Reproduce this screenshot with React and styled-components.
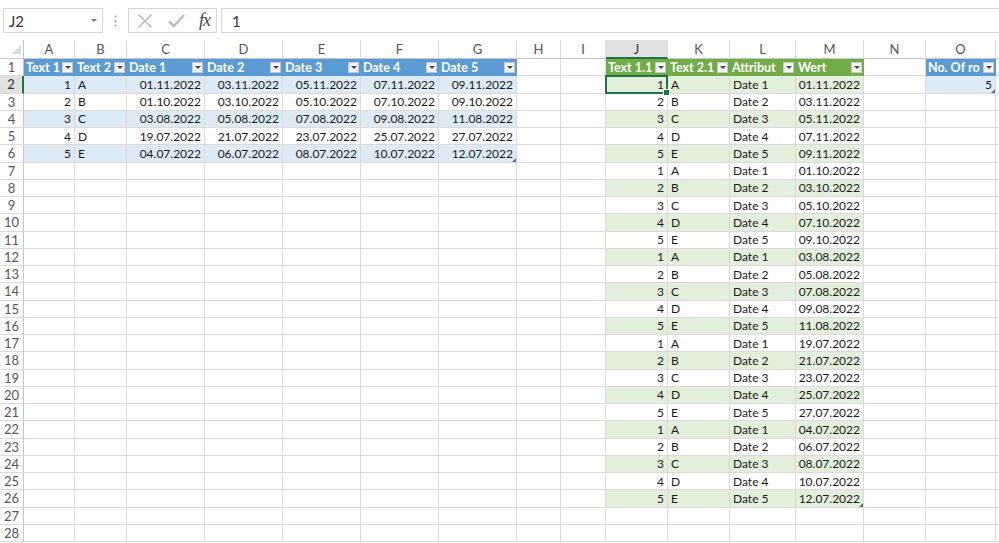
import React from 'react'
import styled, { createGlobalStyle, css } from 'styled-components'

const GlobalStyle = createGlobalStyle`
  html, body {
    margin: 0;
    padding: 0;
    background: #fff;
  }
  body {
    width: 999px;
    height: 543px;
    overflow: hidden;
    font-family: Lato, "Liberation Sans", sans-serif;
  }
`

const TONES = {
  blue: { head: '#5b9bd5', band: '#ddebf7', mark: '#41719c' },
  green: { head: '#70ad47', band: '#e2efda', mark: '#507e32' }
}

const COLS = [
  { id: 'A', w: 51 }, { id: 'B', w: 52 }, { id: 'C', w: 78 }, { id: 'D', w: 78 },
  { id: 'E', w: 78 }, { id: 'F', w: 78 }, { id: 'G', w: 78 }, { id: 'H', w: 44 },
  { id: 'I', w: 45 }, { id: 'J', w: 62 }, { id: 'K', w: 62 }, { id: 'L', w: 66 },
  { id: 'M', w: 68 }, { id: 'N', w: 62 }, { id: 'O', w: 70 }, { id: '', w: 0 }
]

const LETTERS = ['A', 'B', 'C', 'D', 'E']
const DATES = [
  ['01.11.2022', '03.11.2022', '05.11.2022', '07.11.2022', '09.11.2022'],
  ['01.10.2022', '03.10.2022', '05.10.2022', '07.10.2022', '09.10.2022'],
  ['03.08.2022', '05.08.2022', '07.08.2022', '09.08.2022', '11.08.2022'],
  ['19.07.2022', '21.07.2022', '23.07.2022', '25.07.2022', '27.07.2022'],
  ['04.07.2022', '06.07.2022', '08.07.2022', '10.07.2022', '12.07.2022']
]

// builds the cell map: key "row-col"
const buildCells = () => {
  const cells = {}
  const put = (r, c, cell) => { cells[`${r}-${c}`] = cell }

  // blue table A1:G6
  const blueHead = ['Text 1', 'Text 2', 'Date 1', 'Date 2', 'Date 3', 'Date 4', 'Date 5']
  blueHead.forEach((t, c) => put(1, c, { text: t, tone: 'blue', head: true }))
  DATES.forEach((row, i) => {
    const r = i + 2
    const band = r % 2 === 0
    put(r, 0, { text: String(i + 1), align: 'right', tone: 'blue', band })
    put(r, 1, { text: LETTERS[i], tone: 'blue', band })
    row.forEach((d, k) => put(r, k + 2, { text: d, align: 'right', tone: 'blue', band, handle: r === 6 && k === 4 }))
  })

  // green table J1:M26
  const greenHead = ['Text 1.1', 'Text 2.1', 'Attribut', 'Wert']
  greenHead.forEach((t, c) => put(1, c + 9, { text: t, tone: 'green', head: true }))
  DATES.forEach((row, i) => {
    row.forEach((d, k) => {
      const r = 2 + i * 5 + k
      const band = r % 2 === 0
      put(r, 9, { text: String(k + 1), align: 'right', tone: 'green', band, selected: r === 2 })
      put(r, 10, { text: LETTERS[k], tone: 'green', band })
      put(r, 11, { text: `Date ${k + 1}`, tone: 'green', band })
      put(r, 12, { text: d, align: 'right', tone: 'green', band, handle: r === 26 })
    })
  })

  // small blue table O1:O2, header clipped by its filter button
  put(1, 14, { text: 'No. Of ro', tone: 'blue', head: true })
  put(2, 14, { text: '5', align: 'right', tone: 'blue', band: true, handle: true })

  return cells
}

const CELLS = buildCells()
const ROWS = Array.from({ length: 28 }, (_, i) => i + 1)

const Page = styled.div`
  width: 999px;
  height: 543px;
  overflow: hidden;
`

const FormulaBar = styled.div`
  display: flex;
  align-items: stretch;
  height: 25px;
  margin-top: 8px;
  padding-left: 3px;
`

const NameBox = styled.div`
  width: 100px;
  box-sizing: border-box;
  border: 1px solid #d5d5d5;
  display: flex;
  align-items: center;
  justify-content: space-between;
  padding: 0 5px 0 5px;
  font-size: 15px;
  color: #333;
`

const Caret = styled.span`
  width: 0;
  height: 0;
  border-left: 3px solid transparent;
  border-right: 3px solid transparent;
  border-top: 3px solid #777;
`

const Grip = styled.div`
  width: 25px;
  display: flex;
  align-items: center;
  justify-content: center;
`

const FxBox = styled.div`
  width: 89px;
  box-sizing: border-box;
  border: 1px solid #d5d5d5;
  display: flex;
  align-items: center;
  justify-content: space-between;
  padding: 0 6px 0 8px;
`

const FxLabel = styled.span`
  font-family: "Liberation Serif", serif;
  font-style: italic;
  font-size: 18px;
  color: #444;
  letter-spacing: -1px;
`

const FormulaInput = styled.div`
  flex: 1;
  margin-left: 4px;
  box-sizing: border-box;
  border: 1px solid #d5d5d5;
  border-right: none;
  display: flex;
  align-items: center;
  padding-left: 10px;
  font-size: 15px;
  color: #333;
`

const Sheet = styled.div`
  margin-top: 7px;
  display: grid;
  grid-template-columns: 24px ${COLS.map(c => (c.w ? `${c.w}px` : '1fr')).join(' ')};
  grid-template-rows: 19px repeat(28, 17.25px);
`

const headerBase = css`
  box-sizing: border-box;
  display: flex;
  align-items: center;
  justify-content: center;
  font-size: 13px;
  color: #555;
  background: #fff;
`

const Corner = styled.div`
  ${headerBase};
  position: relative;
  border-right: 1px solid #c6c6c6;
  border-bottom: 1px solid #c6c6c6;
  &::after {
    content: '';
    position: absolute;
    right: 2px;
    bottom: 4px;
    border-left: 9px solid transparent;
    border-bottom: 9px solid #dadada;
  }
`

const ColHead = styled.div`
  ${headerBase};
  border-right: 1px solid #dadada;
  border-bottom: 1px solid #c6c6c6;
  ${p => p.$active && css`
    background: #e1e1e1;
    border-bottom: 2px solid #217346;
    color: #333;
  `}
`

const RowHead = styled.div`
  ${headerBase};
  border-right: 1px solid #c6c6c6;
  border-bottom: 1px solid #dadada;
  ${p => p.$active && css`
    background: #e1e1e1;
    border-right: 2px solid #217346;
    color: #333;
  `}
`

const Cell = styled.div`
  position: relative;
  box-sizing: border-box;
  display: flex;
  align-items: center;
  justify-content: ${p => (p.$align === 'right' ? 'flex-end' : 'flex-start')};
  padding: 0 3px 0 3px;
  min-width: 0;
  font-size: 12px;
  color: #1a1a1a;
  white-space: nowrap;
  border-right: 1px solid #dadada;
  border-bottom: 1px solid #dadada;
  background: ${p => (p.$tone && p.$band ? TONES[p.$tone].band : '#fff')};
  ${p => p.$head && css`
    background: ${TONES[p.$tone].head};
    border-right-color: ${TONES[p.$tone].head};
    border-bottom-color: ${TONES[p.$tone].head};
    color: #fff;
    font-weight: bold;
    font-size: 12.5px;
    padding: 0 1px 0 2px;
    gap: 1px;
  `}
`

const HeadText = styled.span`
  flex: 1;
  min-width: 0;
  overflow: hidden;
`

const FilterButton = styled.span`
  flex: none;
  width: 11px;
  height: 11px;
  box-sizing: border-box;
  border: 1px solid #c8c8c8;
  background: #f4f4f4;
  display: flex;
  align-items: center;
  justify-content: center;
  &::after {
    content: '';
    border-left: 3px solid transparent;
    border-right: 3px solid transparent;
    border-top: 3px solid #444;
  }
`

const ResizeMark = styled.span`
  position: absolute;
  right: 0;
  bottom: 0;
  border-left: 4px solid transparent;
  border-bottom: 4px solid ${p => TONES[p.$tone].mark};
`

const Selection = styled.span`
  position: absolute;
  top: -1px;
  left: -1px;
  right: -1px;
  bottom: -1px;
  border: 2px solid #217346;
  pointer-events: none;
  z-index: 2;
`

const FillHandle = styled.span`
  position: absolute;
  right: -4px;
  bottom: -4px;
  width: 5px;
  height: 5px;
  background: #217346;
  border: 1px solid #fff;
  z-index: 3;
`

const CloseIcon = () => (
  <svg width='16' height='16' viewBox='0 0 16 16'>
    <path d='M1.5 1.5 L14.5 14.5 M14.5 1.5 L1.5 14.5' stroke='#bcbcbc' strokeWidth='1.6' fill='none' />
  </svg>
)

const CheckIcon = () => (
  <svg width='17' height='14' viewBox='0 0 17 14'>
    <path d='M1 7.5 L6 12 L16 1' stroke='#bcbcbc' strokeWidth='2.4' fill='none' />
  </svg>
)

const GripDots = () => (
  <svg width='3' height='12' viewBox='0 0 3 12'>
    <circle cx='1.5' cy='1.5' r='1' fill='#9a9a9a' />
    <circle cx='1.5' cy='6' r='1' fill='#9a9a9a' />
    <circle cx='1.5' cy='10.5' r='1' fill='#9a9a9a' />
  </svg>
)

const SheetCell = ({ cell }) => {
  if (!cell) return <Cell />
  if (cell.head) {
    return (
      <Cell $tone={cell.tone} $head>
        <HeadText>{cell.text}</HeadText>
        <FilterButton />
      </Cell>
    )
  }
  return (
    <Cell $tone={cell.tone} $band={cell.band} $align={cell.align}>
      {cell.text}
      {cell.handle && <ResizeMark $tone={cell.tone} />}
      {cell.selected && (
        <Selection>
          <FillHandle />
        </Selection>
      )}
    </Cell>
  )
}

export default function App () {
  return (
    <Page>
      <GlobalStyle />
      <FormulaBar>
        <NameBox>
          J2
          <Caret />
        </NameBox>
        <Grip><GripDots /></Grip>
        <FxBox>
          <CloseIcon />
          <CheckIcon />
          <FxLabel>fx</FxLabel>
        </FxBox>
        <FormulaInput>1</FormulaInput>
      </FormulaBar>
      <Sheet>
        <Corner />
        {COLS.map((c, i) => (
          <ColHead key={i} $active={c.id === 'J'}>{c.id}</ColHead>
        ))}
        {ROWS.map(r => (
          <React.Fragment key={r}>
            <RowHead $active={r === 2}>{r}</RowHead>
            {COLS.map((c, i) => (
              <SheetCell key={i} cell={CELLS[`${r}-${i}`]} />
            ))}
          </React.Fragment>
        ))}
      </Sheet>
    </Page>
  )
}
